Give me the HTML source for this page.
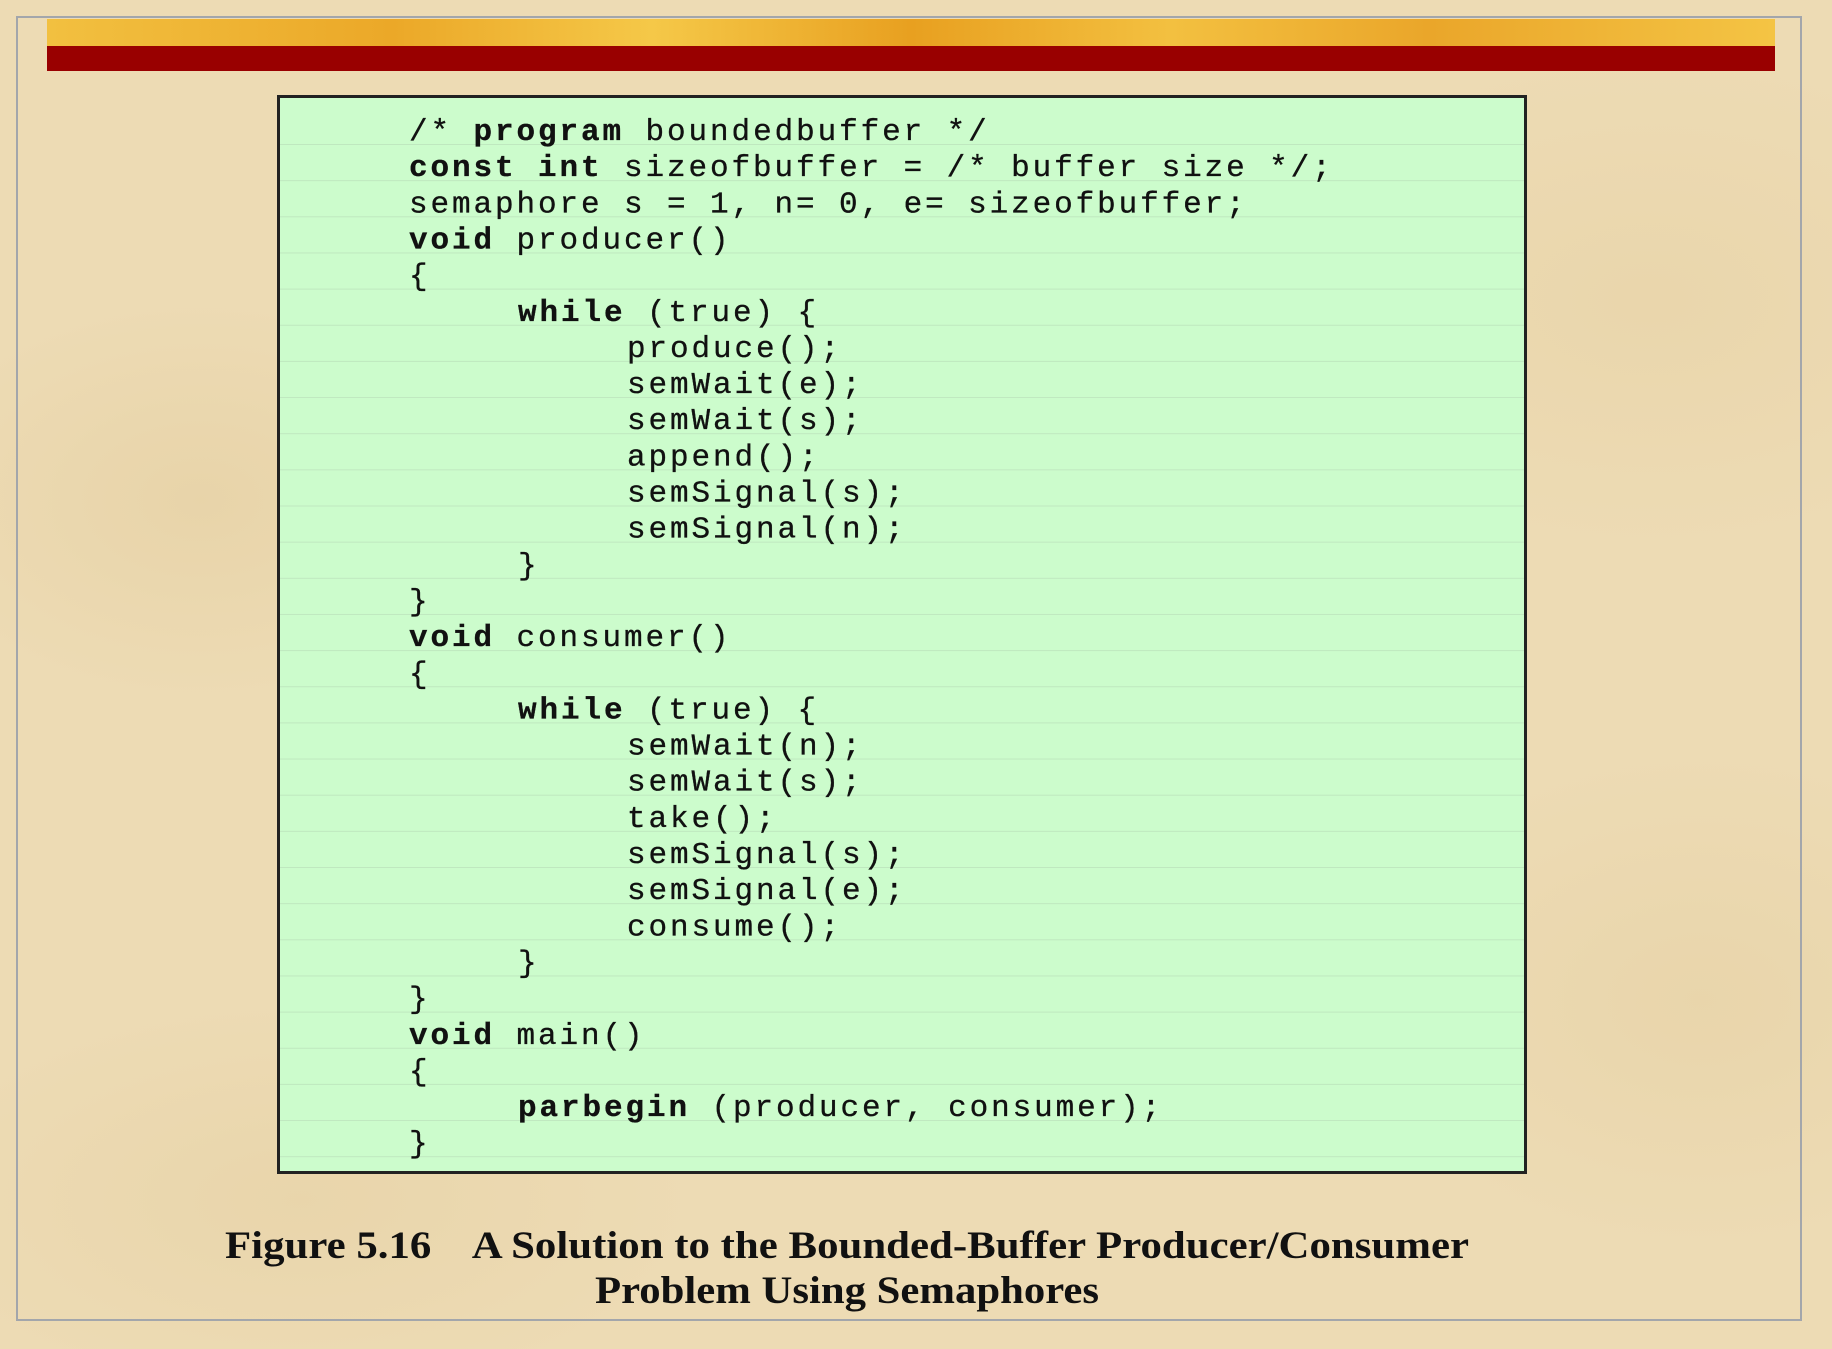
<!DOCTYPE html>
<html><head><meta charset="utf-8">
<style>
html,body{margin:0;padding:0}
body{width:1832px;height:1349px;overflow:hidden;position:relative;
background:
radial-gradient(ellipse 300px 200px at 200px 500px, rgba(210,180,120,0.18), transparent),
radial-gradient(ellipse 400px 250px at 1650px 300px, rgba(215,185,125,0.15), transparent),
radial-gradient(ellipse 350px 250px at 1700px 1000px, rgba(210,180,120,0.15), transparent),
radial-gradient(ellipse 400px 200px at 300px 1200px, rgba(210,180,120,0.15), transparent),
#eddbb4;}
.frame{position:absolute;left:16px;top:16px;width:1786px;height:1305px;border:2px solid #a3a6ab;box-sizing:border-box}
.gold{position:absolute;left:47px;top:19px;width:1728px;height:27px;
background:linear-gradient(90deg,#f2c040 0%,#eba828 20%,#f5c848 35%,#e8a020 50%,#f3c040 65%,#eaa62a 80%,#f4c444 100%)}
.red{position:absolute;left:47px;top:46px;width:1728px;height:25px;background:#990000}
.box{position:absolute;left:277px;top:95px;width:1250px;height:1079px;box-sizing:border-box;border:3px solid #222;background:#ccfccc}
svg{position:absolute;left:0;top:0}
</style></head><body>
<div class="frame"></div>
<div class="gold"></div>
<div class="red"></div>
<div class="box"></div>
<svg width="1832" height="1349" xmlns="http://www.w3.org/2000/svg">
<defs><pattern id="rl" x="0" y="144" width="10" height="36.15" patternUnits="userSpaceOnUse"><rect x="0" y="0" width="10" height="1" fill="#bfe8bf"/></pattern></defs>
<rect x="280" y="144" width="1244" height="1020" fill="url(#rl)"/>
<g font-family="'Liberation Mono', monospace" font-size="31" letter-spacing="2.9" fill="#111" stroke="#111" stroke-width="0.3">
<text x="409" y="140">/* <tspan font-weight="bold">program</tspan> boundedbuffer */</text>
<text x="409" y="176.15"><tspan font-weight="bold">const int</tspan> sizeofbuffer = /* buffer size */;</text>
<text x="409" y="212.3">semaphore s = 1, n= 0, e= sizeofbuffer;</text>
<text x="409" y="248.45"><tspan font-weight="bold">void</tspan> producer()</text>
<text x="409" y="284.6">{</text>
<text x="518" y="320.75"><tspan font-weight="bold">while</tspan> (true) {</text>
<text x="627" y="356.9">produce();</text>
<text x="627" y="393.05">semWait(e);</text>
<text x="627" y="429.2">semWait(s);</text>
<text x="627" y="465.35">append();</text>
<text x="627" y="501.5">semSignal(s);</text>
<text x="627" y="537.65">semSignal(n);</text>
<text x="518" y="573.8">}</text>
<text x="409" y="609.95">}</text>
<text x="409" y="646.1"><tspan font-weight="bold">void</tspan> consumer()</text>
<text x="409" y="682.25">{</text>
<text x="518" y="718.4"><tspan font-weight="bold">while</tspan> (true) {</text>
<text x="627" y="754.55">semWait(n);</text>
<text x="627" y="790.7">semWait(s);</text>
<text x="627" y="826.85">take();</text>
<text x="627" y="863">semSignal(s);</text>
<text x="627" y="899.15">semSignal(e);</text>
<text x="627" y="935.3">consume();</text>
<text x="518" y="971.45">}</text>
<text x="409" y="1007.6">}</text>
<text x="409" y="1043.75"><tspan font-weight="bold">void</tspan> main()</text>
<text x="409" y="1079.9">{</text>
<text x="518" y="1116.05"><tspan font-weight="bold">parbegin</tspan> (producer, consumer);</text>
<text x="409" y="1152.2">}</text>
</g>
<g font-family="'Liberation Serif', serif" font-size="39" font-weight="bold" fill="#111">
<text x="225" y="1258" textLength="1244" lengthAdjust="spacingAndGlyphs" xml:space="preserve">Figure 5.16    A Solution to the Bounded-Buffer Producer/Consumer</text>
<text x="595" y="1303" textLength="504" lengthAdjust="spacingAndGlyphs">Problem Using Semaphores</text>
</g>
</svg>
</body></html>
